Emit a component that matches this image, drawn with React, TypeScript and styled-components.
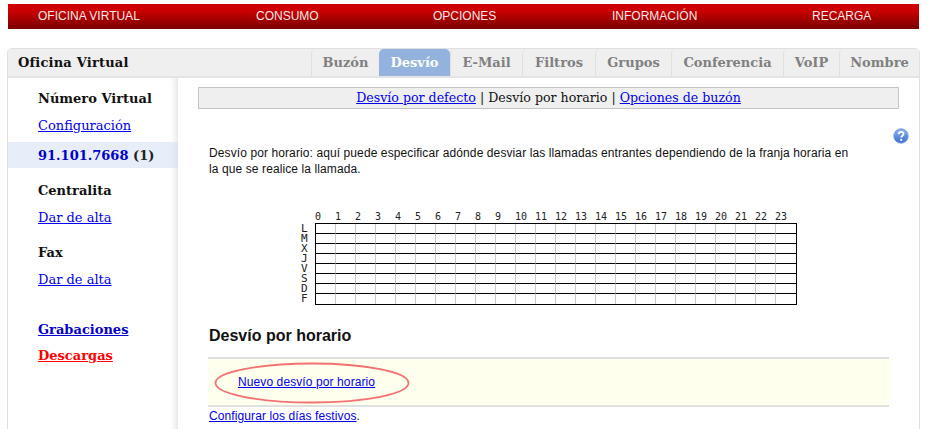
import React from 'react'
import styled, { createGlobalStyle } from 'styled-components'

const GlobalStyle = createGlobalStyle`
  html, body {
    margin: 0;
    padding: 0;
    height: 429px;
    overflow: hidden;
    background: #fff;
    font-family: "Liberation Sans", Arial, sans-serif;
  }
`

const Page = styled.div`
  width: 938px;
  height: 429px;
  overflow: hidden;
  padding: 4px 18px 0 7px;
  box-sizing: border-box;
`

const TopBar = styled.div`
  display: flex;
  height: 25px;
  margin: 0 1px;
  background: linear-gradient(180deg, #cc0000 0%, #cc0000 25%, #7a0000 100%);
  font-size: 12px;
  line-height: 25px;
`

const TopItem = styled.a<{ $width: number }>`
  display: block;
  width: ${(p) => p.$width}px;
  color: #f4e8e8;
  white-space: nowrap;
`

const Panel = styled.div`
  margin-top: 19px;
  border: 1px solid #e0e0e0;
  border-bottom: 0;
  border-radius: 5px 5px 0 0;
  height: 400px;
  box-sizing: border-box;
`

const PanelHeader = styled.div`
  display: flex;
  justify-content: space-between;
  height: 27px;
  background: #efefef;
  border-bottom: 2px solid #e4e4e4;
  font-family: "DejaVu Serif", serif;
`

const PanelTitle = styled.div`
  font-size: 13px;
  font-weight: bold;
  line-height: 27px;
  padding-left: 10px;
  color: #111;
  letter-spacing: 0.2px;
`

const Tabs = styled.div`
  display: flex;
`

const Tab = styled.div<{ $active?: boolean; $width: number }>`
  width: ${(p) => p.$width}px;
  box-sizing: border-box;
  text-align: center;
  font-size: 13px;
  font-weight: bold;
  line-height: 27px;
  height: 27px;
  color: ${(p) => (p.$active ? '#fff' : '#808080')};
  background: ${(p) => (p.$active ? '#94b2de' : '#efefef')};
  border-left: ${(p) => (p.$active ? '0' : '1px solid #e0e0e0')};
  border-radius: 5px 5px 0 0;
`

const Body = styled.div`
  display: flex;
`

const Sidebar = styled.div`
  width: 170px;
  flex: none;
  font-family: "DejaVu Serif", serif;
  font-size: 13px;
  height: 360px;
  box-shadow: inset -7px 0 6px -4px #e6e6e6;
`

const SideHeading = styled.div`
  font-weight: bold;
  color: #111;
  padding-left: 30px;
  height: 22px;
  line-height: 22px;
`

const SideLink = styled.a`
  display: block;
  padding-left: 30px;
  height: 22px;
  line-height: 22px;
  color: #0000ee;
  text-decoration: underline;
`

const SideGroup = styled.div<{ $top: number }>`
  padding-top: ${(p) => p.$top}px;
`

const SideSelected = styled.div`
  margin-top: 5px;
  height: 26px;
  line-height: 27px;
  padding-left: 30px;
  font-weight: bold;
  color: #222;
  background: #e7eef9;
  box-shadow: inset -7px 0 6px -4px #dde2ea;
  span {
    color: #0000cc;
  }
`

const StrongLink = styled.a<{ $color: string }>`
  display: block;
  padding-left: 30px;
  height: 26px;
  line-height: 26px;
  font-weight: bold;
  color: ${(p) => p.$color};
  text-decoration: underline;
`

const Content = styled.div`
  flex: 1;
  padding: 9px 20px 0 20px;
  position: relative;
`

const SubNav = styled.div`
  height: 20px;
  border: 1px solid #c4c4c4;
  background: #efefef;
  text-align: center;
  font-family: "DejaVu Serif", serif;
  font-size: 12.6px;
  line-height: 20px;
  color: #111;
  a {
    color: #0000ee;
    text-decoration: underline;
  }
`

const HelpIcon = styled.svg`
  position: absolute;
  top: 50px;
  right: 10px;
`

const Intro = styled.p`
  margin: 36px 0 0 11px;
  width: 650px;
  font-size: 12px;
  letter-spacing: 0.1px;
  line-height: 16px;
  color: #111;
`

const ScheduleWrap = styled.div`
  display: grid;
  grid-template-columns: 20px 482px;
  grid-template-rows: 12px auto;
  margin: 34px 0 0 97px;
  font-family: "DejaVu Sans Mono", monospace;
  font-size: 10px;
  color: #222;
`

const Hours = styled.div`
  grid-column: 2;
  display: flex;
`

const Hour = styled.div`
  width: 20px;
  flex: none;
  line-height: 11px;
  white-space: nowrap;
`

const Days = styled.div`
  grid-column: 1;
  display: flex;
  flex-direction: column;
  align-items: flex-end;
  padding: 1px 7px 0 0;
`

const Day = styled.div`
  height: 10px;
  line-height: 10px;
  font-size: 11px;
  width: 7px;
`

const Schedule = styled.div`
  grid-column: 2;
  display: grid;
  grid-template-columns: repeat(24, 20px);
  grid-auto-rows: 10px;
  width: 482px;
  height: 82px;
  box-sizing: border-box;
  border: 1px solid #000;
`

const Cell = styled.div<{ $lastRow: boolean; $lastCol: boolean }>`
  box-sizing: border-box;
  border-right: ${(p) => (p.$lastCol ? '0' : '1px solid #c8c8c8')};
  border-bottom: ${(p) => (p.$lastRow ? '0' : '1px solid #000')};
`

const SectionTitle = styled.h2`
  margin: 21px 0 0 11px;
  font-size: 16px;
  line-height: 20px;
  font-weight: bold;
  color: #111;
`

const NoticeBox = styled.div`
  position: relative;
  margin: 11px 10px 0 10px;
  height: 50px;
  box-sizing: border-box;
  background: #ffffee;
  border-top: 2px solid #e0e0e0;
  border-bottom: 2px solid #e0e0e0;
  padding-left: 30px;
  font-size: 12px;
  letter-spacing: 0.1px;
  line-height: 46px;
  a {
    color: #0000ee;
    text-decoration: underline;
  }
`

const Ellipse = styled.svg`
  position: absolute;
  left: 6px;
  top: 3px;
`

const FootLink = styled.div`
  margin: 1px 0 0 11px;
  font-size: 12px;
  letter-spacing: 0.1px;
  line-height: 16px;
  color: #111;
  a {
    color: #0000ee;
    text-decoration: underline;
  }
`

const hours = Array.from({ length: 24 }, (_, i) => i)
const days = ['L', 'M', 'X', 'J', 'V', 'S', 'D', 'F']
const tabs = [
  { label: 'Buzón', width: 68 },
  { label: 'Desvío', width: 71, active: true },
  { label: 'E-Mail', width: 72 },
  { label: 'Filtros', width: 73 },
  { label: 'Grupos', width: 76 },
  { label: 'Conferencia', width: 112 },
  { label: 'VoIP', width: 56 },
  { label: 'Nombre', width: 80 },
]

const App = () => {
  return (
    <Page>
      <GlobalStyle />
      <TopBar>
        <TopItem $width={30} />
        <TopItem $width={218}>OFICINA VIRTUAL</TopItem>
        <TopItem $width={177}>CONSUMO</TopItem>
        <TopItem $width={179}>OPCIONES</TopItem>
        <TopItem $width={200}>INFORMACIÓN</TopItem>
        <TopItem $width={60}>RECARGA</TopItem>
      </TopBar>
      <Panel>
        <PanelHeader>
          <PanelTitle>Oficina Virtual</PanelTitle>
          <Tabs>
            {tabs.map((t) => (
              <Tab key={t.label} $width={t.width} $active={t.active}>
                {t.label}
              </Tab>
            ))}
          </Tabs>
        </PanelHeader>
        <Body>
          <Sidebar>
            <SideGroup $top={10}>
              <SideHeading>Número Virtual</SideHeading>
            </SideGroup>
            <SideGroup $top={5}>
              <SideLink>Configuración</SideLink>
            </SideGroup>
            <SideSelected>
              <span>91.101.7668</span> (1)
            </SideSelected>
            <SideGroup $top={12}>
              <SideHeading>Centralita</SideHeading>
            </SideGroup>
            <SideGroup $top={5}>
              <SideLink>Dar de alta</SideLink>
            </SideGroup>
            <SideGroup $top={13}>
              <SideHeading>Fax</SideHeading>
            </SideGroup>
            <SideGroup $top={5}>
              <SideLink>Dar de alta</SideLink>
            </SideGroup>
            <SideGroup $top={26}>
              <StrongLink $color="#0000cc">Grabaciones</StrongLink>
              <StrongLink $color="#ff0000">Descargas</StrongLink>
            </SideGroup>
          </Sidebar>
          <Content>
            <SubNav>
              <a>Desvío por defecto</a> | Desvío por horario | <a>Opciones de buzón</a>
            </SubNav>
            <HelpIcon width="16" height="16" viewBox="0 0 16 16">
              <defs>
                <linearGradient id="help" x1="0" y1="0" x2="0" y2="1">
                  <stop offset="0" stopColor="#8fb3ea" />
                  <stop offset="1" stopColor="#3a6fd0" />
                </linearGradient>
              </defs>
              <circle cx="8" cy="8" r="7.2" fill="url(#help)" stroke="#5f8fdc" strokeWidth="0.8" />
              <path
                d="M5.6 6.2c0-1.5 1.1-2.3 2.5-2.3s2.4.8 2.4 2c0 1.8-2.3 1.9-2.3 3.5"
                fill="none"
                stroke="#fff"
                strokeWidth="1.7"
              />
              <circle cx="8.2" cy="11.9" r="1.1" fill="#fff" />
            </HelpIcon>
            <Intro>
              Desvío por horario: aquí puede especificar adónde desviar las llamadas entrantes dependiendo de la franja horaria en la que se realice la llamada.
            </Intro>
            <ScheduleWrap>
              <Hours>
                {hours.map((h) => (
                  <Hour key={h}>{h}</Hour>
                ))}
              </Hours>
              <Days>
                {days.map((d) => (
                  <Day key={d}>{d}</Day>
                ))}
              </Days>
              <Schedule>
                {days.map((d, r) =>
                  hours.map((h) => (
                    <Cell key={`${d}${h}`} $lastRow={r === 7} $lastCol={h === 23} />
                  )),
                )}
              </Schedule>
            </ScheduleWrap>
            <SectionTitle>Desvío por horario</SectionTitle>
            <NoticeBox>
              <Ellipse width="196" height="42" viewBox="0 0 196 42">
                <ellipse cx="98" cy="21" rx="96.5" ry="19.5" fill="none" stroke="#f27272" strokeWidth="1.8" />
              </Ellipse>
              <a>Nuevo desvío por horario</a>
            </NoticeBox>
            <FootLink>
              <a>Configurar los días festivos</a>.
            </FootLink>
          </Content>
        </Body>
      </Panel>
    </Page>
  )
}

export default App
